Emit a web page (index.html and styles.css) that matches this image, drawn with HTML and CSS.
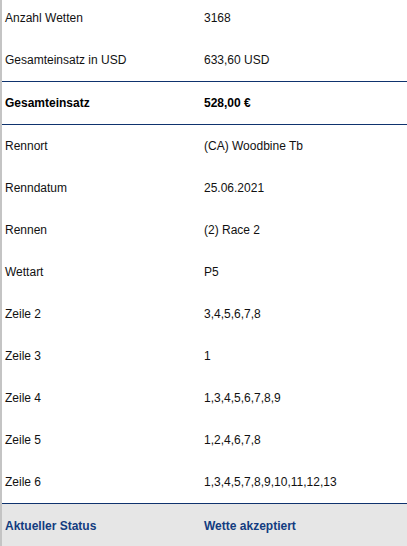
FILE: index.html
```html
<!DOCTYPE html>
<html lang="de">
<head>
<meta charset="utf-8">
<link rel="stylesheet" href="styles.css">
</head>
<body>
<div class="panel">
  <div class="row first"><span class="label">Anzahl Wetten</span><span class="value">3168</span></div>
  <div class="row sep"><span class="label">Gesamteinsatz in USD</span><span class="value">633,60 USD</span></div>
  <div class="row total sep"><span class="label">Gesamteinsatz</span><span class="value">528,00 €</span></div>
  <div class="row"><span class="label">Rennort</span><span class="value">(CA) Woodbine Tb</span></div>
  <div class="row"><span class="label">Renndatum</span><span class="value">25.06.2021</span></div>
  <div class="row"><span class="label">Rennen</span><span class="value">(2) Race 2</span></div>
  <div class="row"><span class="label">Wettart</span><span class="value">P5</span></div>
  <div class="row"><span class="label">Zeile 2</span><span class="value">3,4,5,6,7,8</span></div>
  <div class="row"><span class="label">Zeile 3</span><span class="value">1</span></div>
  <div class="row"><span class="label">Zeile 4</span><span class="value">1,3,4,5,6,7,8,9</span></div>
  <div class="row"><span class="label">Zeile 5</span><span class="value">1,2,4,6,7,8</span></div>
  <div class="row sep"><span class="label">Zeile 6</span><span class="value">1,3,4,5,7,8,9,10,11,12,13</span></div>
  <div class="row status"><span class="label">Aktueller Status</span><span class="value">Wette akzeptiert</span></div>
</div>
</body>
</html>
```
FILE: styles.css
```css
html, body {
  margin: 0;
  padding: 0;
  background: #ffffff;
  overflow: hidden;
}
body {
  font-family: "Liberation Sans", Arial, sans-serif;
  font-size: 12px;
  color: #111111;
}
.panel {
  border-left: 2px solid #c4c4c4;
  margin-top: -3px;
  min-height: 560px;
}
.row {
  display: grid;
  grid-template-columns: 199px 1fr;
  align-items: center;
  height: 42px;
  padding-left: 3px;
}
.row.sep {
  border-bottom: 1px solid #0f336e;
}
.row.total {
  font-weight: bold;
  color: #000000;
}
.row.status {
  background: #e6e6e6;
  color: #123c80;
  font-weight: bold;
  height: 43px;
}
```
